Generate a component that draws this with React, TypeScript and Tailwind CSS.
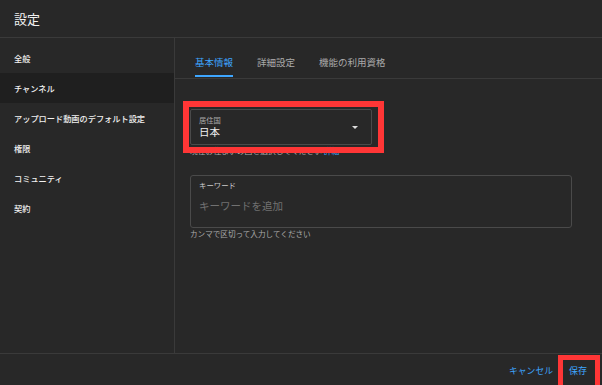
const font = { fontFamily: '"Noto Sans CJK JP", "Noto Sans", sans-serif' };

const menu = ["全般", "チャンネル", "アップロード動画のデフォルト設定", "権限", "コミュニティ", "契約"];
const tabs = ["基本情報", "詳細設定", "機能の利用資格"];

export default function App() {
  return (
    <div
      className="w-[602px] h-[385px] bg-[#282828] text-[#f1f1f1] flex flex-col overflow-hidden"
      style={font}
    >
      <div className="h-[38px] shrink-0 border-b border-[#3a3a3a] flex items-center px-[14px]">
        <h1 className="text-[13px] leading-none">設定</h1>
      </div>

      <div className="flex flex-1 min-h-0">
        <aside className="w-[175px] shrink-0 border-r border-[#3a3a3a] pt-[5px]">
          {menu.map((m, i) => (
            <div
              key={m}
              className={`h-[30px] flex items-center px-[14px] text-[8.2px] font-medium ${
                i === 1 ? "bg-[#1f1f1f]" : ""
              }`}
            >
              {m}
            </div>
          ))}
        </aside>

        <main className="flex-1 min-w-0">
          <div className="h-[41px] border-b border-[#3a3a3a] flex items-end gap-[24px] px-[20px]">
            {tabs.map((t, i) => (
              <div
                key={t}
                className={`h-full flex items-center text-[9.5px] relative ${
                  i === 0 ? "text-[#3ea6ff]" : "text-[#aaaaaa]"
                }`}
              >
                <span className="mt-[8px]">{t}</span>
                {i === 0 && (
                  <div className="absolute left-0 right-0 bottom-[1px] h-[2px] bg-[#3ea6ff]" />
                )}
              </div>
            ))}
          </div>

          <div className="pl-[15px] pr-[30px] pt-[30px]">
            <div className="relative w-[182px]">
              <div className="h-[36px] border border-[#4a4a4a] rounded-[2px] flex items-center justify-between pl-[8px] pr-[13px]">
                <div className="flex flex-col">
                  <span className="text-[7.3px] text-[#aaaaaa] leading-[10px]">居住国</span>
                  <span className="text-[10.5px] leading-[14px]">日本</span>
                </div>
                <svg width="6" height="3" viewBox="0 0 6 3" className="mt-[1px]">
                  <path d="M0 0 L6 0 L3 3 Z" fill="#dddddd" />
                </svg>
              </div>
              <div className="absolute left-[-7px] right-[-12px] top-[-8px] bottom-[-8px] border-[6px] border-[#ff3636] pointer-events-none" />
            </div>
            <p className="text-[7.8px] text-[#aaaaaa] mt-[1px] leading-[10px]">
              現在お住まいの国を選択してください <span className="text-[#3ea6ff]">詳細</span>
            </p>

            <div className="mt-[19px] h-[53px] border border-[#4a4a4a] rounded-[3px] px-[8px] pt-[3px]">
              <div className="text-[7.4px] text-[#cccccc] leading-[12px]">キーワード</div>
              <div className="text-[10.5px] text-[#717171] mt-[8px] leading-[14px]">キーワードを追加</div>
            </div>
            <p className="text-[7.6px] text-[#aaaaaa] mt-[1px] leading-[10px]">
              カンマで区切って入力してください
            </p>
          </div>
        </main>
      </div>

      <div className="h-[32px] shrink-0 border-t border-[#3a3a3a] flex items-center justify-end pr-[9px] gap-[10px]">
        <span className="text-[8.8px] leading-[12px] text-[#3ea6ff] mt-[2px]">キャンセル</span>
        <div className="relative px-[6px] mt-[2px] flex items-center">
          <span className="text-[9px] leading-[12px] text-[#3ea6ff]">保存</span>
          <div className="absolute left-[-5px] right-[-7px] top-[-10px] bottom-[-14px] border-[5px] border-[#ff3636] pointer-events-none" />
        </div>
      </div>
    </div>
  );
}
